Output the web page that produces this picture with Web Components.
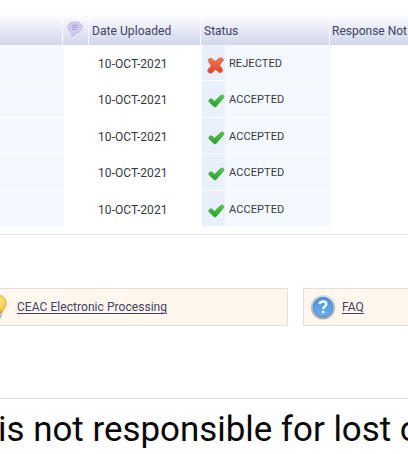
<!DOCTYPE html>
<html lang="en">
<head>
<meta charset="utf-8">
<title>Document Status</title>
<style>
    body {
        margin: 0;
        width: 408px;
        height: 454px;
        overflow: hidden;
        background: #fff;
        font-family: Roboto, "Liberation Sans", sans-serif;
        font-size: 12px;
        color: #38383f;
    }
</style>
</head>
<body>
<status-page></status-page>

<script>
const ICONS = {
    rejected: `
        <svg width="17" height="17" viewBox="0 0 17 17">
            <defs><linearGradient id="r" x1="0" y1="0" x2="0" y2="1">
                <stop offset="0" stop-color="#f47a58"/><stop offset="1" stop-color="#dd4422"/>
            </linearGradient></defs>
            <path d="M2.2 1.8Q4 .8 5.8 2.4L8.8 4.6 11.2 1.8Q13 .3 15.4 1.4T15.2 4.4L12.6 8.2 15 11.6Q16.4 14 14.6 15.2T11.2 14.6L8.3 12.4 5.4 15.4Q3.4 17 1.6 15.4T1.3 12.3L4.3 8.7 2 5.2Q.6 3 2.2 1.8Z" fill="url(#r)" stroke="#d5503a" stroke-width=".7"/>
        </svg>`,
    accepted: `
        <svg width="17" height="14" viewBox="0 0 17 14">
            <defs><linearGradient id="a" x1="0" y1="0" x2="0" y2="1">
                <stop offset="0" stop-color="#5ccb4c"/><stop offset="1" stop-color="#299b28"/>
            </linearGradient></defs>
            <path d="M1.2 5.8Q2.7 4.2 4 5.1L6.5 7.3 12.2 2Q13.6.5 15 1.2T15.6 3.7L8.2 12.4Q7 13.6 5.7 12.3L1.2 8Q.3 6.8 1.2 5.8Z" fill="url(#a)" stroke="#36a535" stroke-width=".7"/>
        </svg>`,
    comment: `
        <svg width="16" height="16" viewBox="0 0 17 17">
            <path d="M8.5 1C13 1 16 3.3 16 6.7S13 12.3 9.4 12.6Q8 15.4 4.8 16.2 5.7 14.2 5 11.7 1 10.2 1 6.7C1 3.3 4 1 8.5 1Z" fill="#cfccef" stroke="#b9b6e2"/>
            <path d="M5.2 4.6H12M5.2 6.8H12M5.2 9H10" stroke="#9e99d6" fill="none"/>
        </svg>`,
    bulb: `
        <svg width="24" height="28" viewBox="0 0 24 28">
            <defs><radialGradient id="b" cx=".5" cy=".4" r=".6">
                <stop offset="0" stop-color="#fff3a0"/><stop offset=".65" stop-color="#f9d35a"/><stop offset="1" stop-color="#e5a535"/>
            </radialGradient></defs>
            <path d="M12 1.5C18.5 1.5 23.3 5.2 23.3 10.5 23.3 15 19.5 16.5 18.7 20.5H5.3C4.5 16.5 .7 15 .7 10.5 .7 5.2 5.5 1.5 12 1.5Z" fill="url(#b)" stroke="#e2ae4c" stroke-width=".8"/>
            <path d="M5.5 19.5H18.7V23L17 26H7L5.5 23Z" fill="#a3adb4"/>
            <path d="M6 21.8H18.5" stroke="#dde2e4"/>
        </svg>`,
    help: `
        <svg width="26" height="26" viewBox="0 0 26 26">
            <defs>
                <linearGradient id="ring" x1="0" y1="0" x2="0" y2="1">
                    <stop offset="0" stop-color="#dee5e9"/><stop offset="1" stop-color="#98a3ac"/>
                </linearGradient>
                <linearGradient id="disc" x1="0" y1="0" x2="0" y2="1">
                    <stop offset="0" stop-color="#4c8fd6"/><stop offset="1" stop-color="#68b2f1"/>
                </linearGradient>
            </defs>
            <circle cx="13" cy="13" r="12.3" fill="url(#ring)"/>
            <circle cx="13" cy="13" r="9.8" fill="url(#disc)" stroke="#4283c4" stroke-width=".8"/>
            <path d="M9.5 10.2Q9.7 7.5 13 7.5T16.4 10.1C16.4 12.2 13.2 12.2 13.2 14.9" fill="none" stroke="#fff" stroke-width="2.4"/>
            <circle cx="13.2" cy="18" r="1.4" fill="#fff"/>
        </svg>`
};

class StatusIcon extends HTMLElement {
    constructor() {
        super();
        this.attachShadow({ mode: 'open' });
    }

    connectedCallback() {
        this.shadowRoot.innerHTML = `
            <style>
                :host { display: block; flex: none; }
                svg { display: block; }
            </style>
            ${ICONS[this.getAttribute('name')]}
        `;
    }
}

class TableHeader extends HTMLElement {
    constructor() {
        super();
        this.attachShadow({ mode: 'open' });
    }

    connectedCallback() {
        this.shadowRoot.innerHTML = `
            <style>
                :host {
                    display: grid;
                    grid-template-columns: 63px 26px 112px 129px 78px;
                    height: 30px;
                    background: linear-gradient(#fdfdff, #edeff8 35%, #dfe3f1 65%, #d1d8ea);
                    color: #414066;
                    line-height: 32px;
                    white-space: nowrap;
                }
                div {
                    box-sizing: border-box;
                    height: 30px;
                    padding-left: 3px;
                    border-right: 1px solid #f8f9fd;
                }
                div:last-child { padding-left: 2px; border: 0; }
                .note { padding: 6px 0 0 4px; }
                .date { letter-spacing: .07px; }
            </style>
            <div></div>
            <div class="note"><status-icon name="comment"></status-icon></div>
            <div class="date">Date Uploaded</div>
            <div>Status</div>
            <div>Response Not</div>
        `;
    }
}

class DocumentRow extends HTMLElement {
    constructor() {
        super();
        this.attachShadow({ mode: 'open' });
    }

    connectedCallback() {
        const status = this.getAttribute('status');

        this.shadowRoot.innerHTML = `
            <style>
                :host {
                    display: grid;
                    grid-template-columns: 64px 138px 23px 106px;
                    height: 36.4px;
                    line-height: 37px;
                }
                div { box-sizing: border-box; height: 36.4px; border-bottom: 1px solid #fafcff; }
                .name, .status { background: #f4f8ff; }
                .date { padding-left: 34px; border-color: #fff; line-height: 38px; letter-spacing: .07px; }
                .mark { background: #e8f0fd; padding: 12px 0 0 5px; }
                .mark.accepted { padding: 13px 0 0 6px; }
                .status { padding-left: 4px; font-size: 11px; letter-spacing: .08px; }
            </style>
            <div class="name"></div>
            <div class="date"><slot></slot></div>
            <div class="mark ${status}"><status-icon name="${status}"></status-icon></div>
            <div class="status">${status.toUpperCase()}</div>
        `;
    }
}

class HelpCard extends HTMLElement {
    constructor() {
        super();
        this.attachShadow({ mode: 'open' });
    }

    connectedCallback() {
        this.shadowRoot.innerHTML = `
            <style>
                :host {
                    display: flex;
                    align-items: center;
                    box-sizing: border-box;
                    height: 38px;
                    gap: 6px;
                    padding-left: 6px;
                    border: 1px solid #e4e0d8;
                    background: #fff7ed;
                }
                :host([icon="bulb"]) { gap: 10px; padding-left: 0; }
                a {
                    color: #414066;
                    letter-spacing: .05px;
                    text-decoration: underline;
                    text-underline-offset: 2px;
                    white-space: nowrap;
                }
            </style>
            <status-icon name="${this.getAttribute('icon')}"></status-icon>
            <a><slot></slot></a>
        `;
    }
}

class StatusPage extends HTMLElement {
    constructor() {
        super();
        this.attachShadow({ mode: 'open' });
    }

    connectedCallback() {
        this.shadowRoot.innerHTML = `
            <style>
                :host { display: block; padding-top: 15px; overflow: hidden; }
                .rows { height: 189px; border-bottom: 1px solid #e8e8e8; }
                .cards {
                    display: grid;
                    grid-template-columns: 306px 200px;
                    gap: 15px;
                    margin: 53px 0 0 -18px;
                    height: 110px;
                }
                .notice {
                    border-top: 1px solid #ddd;
                    padding-top: 11px;
                    font-size: 34.9px;
                    line-height: 40px;
                    color: #080808;
                    text-indent: -2px;
                    white-space: nowrap;
                }
            </style>
            <table-header></table-header>
            <div class="rows">
                <document-row status="rejected">10-OCT-2021</document-row>
                <document-row status="accepted">10-OCT-2021</document-row>
                <document-row status="accepted">10-OCT-2021</document-row>
                <document-row status="accepted">10-OCT-2021</document-row>
                <document-row status="accepted">10-OCT-2021</document-row>
            </div>
            <div class="cards">
                <help-card icon="bulb">CEAC Electronic Processing</help-card>
                <help-card icon="help">FAQ</help-card>
            </div>
            <div class="notice">is not responsible for lost o</div>
        `;
    }
}

customElements.define('status-icon', StatusIcon);
customElements.define('table-header', TableHeader);
customElements.define('document-row', DocumentRow);
customElements.define('help-card', HelpCard);
customElements.define('status-page', StatusPage);
</script>
</body>
</html>
